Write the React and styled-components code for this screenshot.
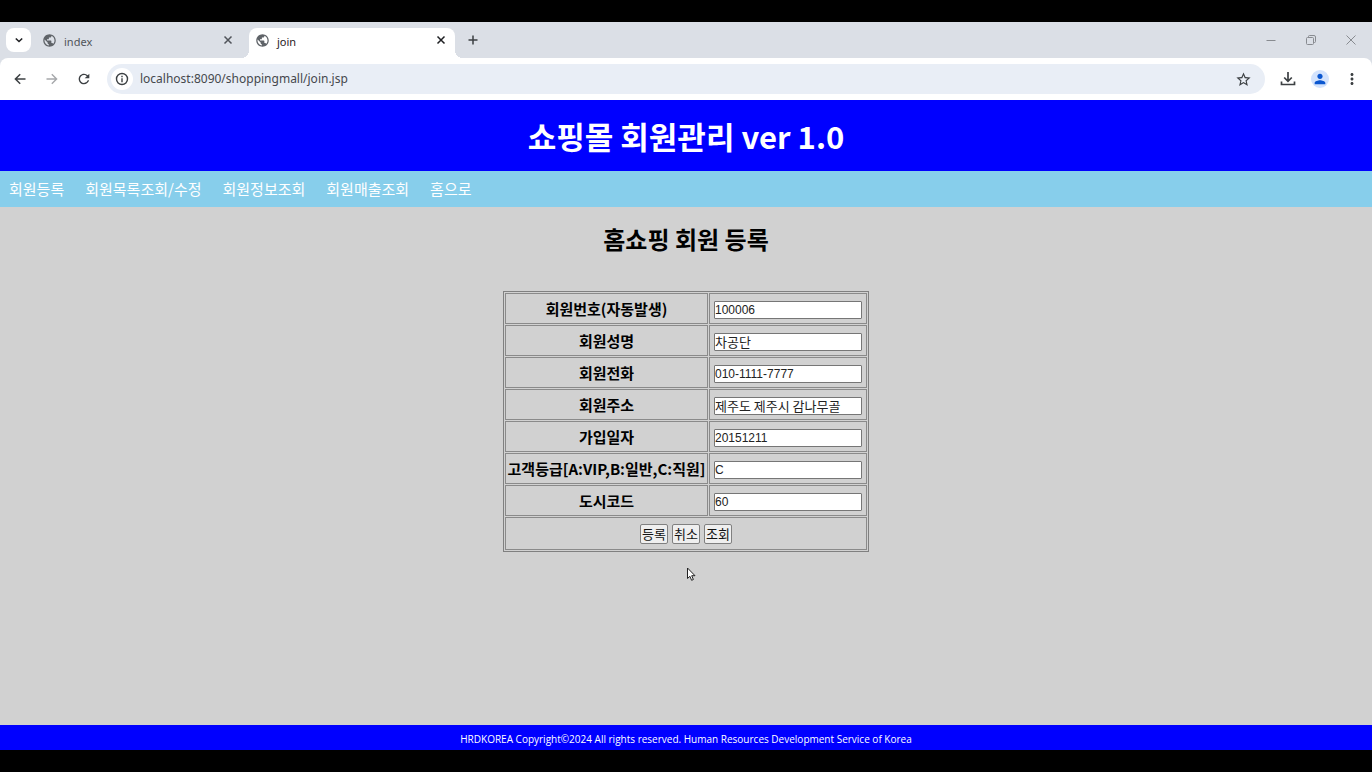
import React from "react";
import styled, { createGlobalStyle } from "styled-components";
import { MdPublic, MdRefresh, MdStarBorder, MdPerson, MdMoreVert } from "react-icons/md";

const GlobalStyle = createGlobalStyle`
  * { box-sizing: border-box; }
  body { margin: 0; background: #000; }
  button, input { font-family: inherit; }
`;

const Screen = styled.div`
  display: flex;
  flex-direction: column;
  min-height: 100vh;
  padding: 22px 0;
  background: #000;
  font-family: "Noto Sans CJK KR", sans-serif;
`;

/* Browser frame */
const TabStrip = styled.div`
  display: flex;
  height: 36px;
  padding: 6px 5px 0 6px;
  background: #dbdfe6;
`;

const IconButton = styled.button`
  display: flex;
  align-items: center;
  justify-content: center;
  flex: none;
  width: ${(p) => p.$width || 32}px;
  height: ${(p) => p.$height || 24}px;
  padding: 0;
  border: 0;
  border-radius: 8px;
  background: ${(p) => p.$bg || "transparent"};
  color: ${(p) => p.$color || "#3c4043"};
`;

const Tab = styled.div`
  position: relative;
  display: flex;
  align-items: center;
  width: ${(p) => (p.$active ? 206 : 218)}px;
  height: 30px;
  padding: ${(p) => (p.$active ? "0 4px 6px 6px" : "0 11px 6px 11px")};
  border-radius: 8px 8px 0 0;
  background: ${(p) => (p.$active ? "#fff" : "transparent")};
  color: ${(p) => (p.$active ? "#1f2023" : "#50545a")};

  &::before,
  &::after {
    content: "";
    display: ${(p) => (p.$active ? "block" : "none")};
    position: absolute;
    bottom: 0;
    width: 8px;
    height: 8px;
  }
  &::before {
    left: -8px;
    background: radial-gradient(circle at 0 0, transparent 8px, #fff 8px);
  }
  &::after {
    right: -8px;
    background: radial-gradient(circle at 100% 0, transparent 8px, #fff 8px);
  }
`;

const TabTitle = styled.span`
  flex: 1;
  padding: 3px 0 0 7px;
  font: 11px/18px "Noto Sans", sans-serif;
`;

const NewTab = styled(IconButton)`
  margin-left: 6px;
`;

const WindowControls = styled.div`
  display: flex;
  gap: 8px;
  margin-left: auto;
`;

const ToolbarBack = styled.div`
  background: #dbdfe6;
`;

const Toolbar = styled.div`
  display: flex;
  align-items: center;
  height: 42px;
  padding: 0 4px;
  border-radius: 8px 8px 0 0;
  background: #fff;
`;

const AddressBar = styled.form`
  display: flex;
  align-items: center;
  flex: 1;
  height: 30px;
  margin: 0 7px;
  padding: 0 6px 0 4px;
  border-radius: 15px;
  background: #e9eef6;
`;

const SiteInfo = styled(IconButton)`
  border-radius: 50%;
`;

const Address = styled.input`
  flex: 1;
  min-width: 0;
  padding: 0 0 0 7px;
  border: 0;
  outline: 0;
  background: transparent;
  color: #45484d;
  font: 12px/20px "Noto Sans", sans-serif;
`;

const Avatar = styled.span`
  display: flex;
  align-items: center;
  justify-content: center;
  width: 18px;
  height: 18px;
  border-radius: 50%;
  background: #d3e3fd;
  color: #0b57d0;
`;

/* Shopping mall page */
const Page = styled.div`
  position: relative;
  display: flex;
  flex-direction: column;
  flex: 1;
  background: #d1d1d1;
`;

const Header = styled.header`
  display: flex;
  align-items: center;
  justify-content: center;
  height: 71px;
  background: #00f;
`;

const SiteTitle = styled.h1`
  margin: 0;
  color: #fff;
  font-size: 31px;
  line-height: 46px;
`;

const Nav = styled.nav`
  display: flex;
  align-items: center;
  gap: 21px;
  height: 36px;
  padding: 0 9px;
  background: #87ceeb;
`;

const NavLink = styled.a`
  color: #fff;
  font-size: 15px;
  line-height: 24px;
  text-decoration: none;
`;

const Main = styled.main`
  display: flex;
  flex-direction: column;
  align-items: center;
  flex: 1;
  padding-top: 14px;
`;

const PageTitle = styled.h2`
  margin: 0 0 34px;
  color: #000;
  font-size: 24px;
  line-height: 36px;
`;

const FormTable = styled.table`
  border: 1px solid #808080;
  border-spacing: 1px;
`;

const LabelCell = styled.th`
  width: 203px;
  height: 31px;
  padding: 0;
  border: 1px solid #8a8a8a;
  font-size: 15px;
  line-height: 24px;
  white-space: nowrap;
`;

const InputCell = styled.td`
  width: 158px;
  padding: 2px 4px 0;
  border: 1px solid #8a8a8a;
`;

const TextInput = styled.input`
  display: block;
  width: 100%;
  height: 18px;
  padding: 0;
  border: 1px solid #767676;
  border-radius: 1px;
  background: #fff;
  color: #222;
  font-family: ${(p) => (p.$hangul ? '"Noto Sans CJK KR"' : '"Liberation Sans"')}, sans-serif;
  font-size: ${(p) => (p.$hangul ? 13 : 12)}px;
  line-height: 16px;
`;

const ActionCell = styled.td`
  height: 33px;
  padding: 1px 0 0;
  border: 1px solid #8a8a8a;
`;

const Actions = styled.div`
  display: flex;
  justify-content: center;
  gap: 4px;
`;

const ActionButton = styled.button`
  width: 28px;
  height: 20px;
  padding: 0;
  border: 1px solid #808080;
  border-radius: 2px;
  background: #efefef;
  color: #111;
  font-size: 13px;
  line-height: 18px;
`;

const Footer = styled.footer`
  height: 25px;
  padding-top: 2px;
  background: #00f;
  color: #fff;
  font: 10px/24px "Open Sans", sans-serif;
  text-align: center;
`;

const Pointer = styled.svg`
  position: absolute;
  top: 467px;
  left: 50%;
`;

const Stroke = ({ size = 16, width = 2, children }) => (
  <svg width={size} height={size} viewBox={`0 0 ${size} ${size}`} fill="none" stroke="currentColor" strokeWidth={width}>
    {children}
  </svg>
);

const CloseIcon = () => (
  <Stroke size={10} width={1.5}><path d="M1.5 1.5l7 7M8.5 1.5l-7 7" /></Stroke>
);

const tabs = [{ title: "index" }, { title: "join", active: true }];

const links = ["회원등록", "회원목록조회/수정", "회원정보조회", "회원매출조회", "홈으로"];

const fields = [
  { id: "custno", label: "회원번호(자동발생)", value: "100006" },
  { id: "custname", label: "회원성명", value: "차공단", hangul: true },
  { id: "phone", label: "회원전화", value: "010-1111-7777" },
  { id: "address", label: "회원주소", value: "제주도 제주시 감나무골", hangul: true },
  { id: "joindate", label: "가입일자", value: "20151211" },
  { id: "grade", label: "고객등급[A:VIP,B:일반,C:직원]", value: "C" },
  { id: "city", label: "도시코드", value: "60" },
];

function BrowserFrame() {
  return (
    <>
      <TabStrip>
        <IconButton $width={25} $bg="#fff" $color="#1f2023" aria-label="Search tabs">
          <Stroke size={10} width={1.6}><path d="M1.8 3.5L5 6.5l3.2-3" /></Stroke>
        </IconButton>
        {tabs.map((tab) => (
          <Tab key={tab.title} $active={tab.active}>
            <MdPublic size={15} color="#5f6368" />
            <TabTitle>{tab.title}</TabTitle>
            <IconButton $width={20} $color={tab.active ? "#1f2023" : "#50545a"} aria-label={`Close ${tab.title}`}>
              <CloseIcon />
            </IconButton>
          </Tab>
        ))}
        <NewTab $width={24} aria-label="New tab">
          <Stroke size={10} width={1.5}><path d="M5 .5v9M.5 5h9" /></Stroke>
        </NewTab>
        <WindowControls>
          <IconButton $color="#888b90" aria-label="Minimize">
            <Stroke size={10} width={1}><path d="M.5 5.5h9" /></Stroke>
          </IconButton>
          <IconButton $color="#888b90" aria-label="Restore">
            <Stroke size={10} width={1}>
              <rect x=".5" y="2.5" width="7" height="7" rx="1" />
              <path d="M2.5 2.5V1.5a1 1 0 0 1 1-1h4.500a1.500 1.500 0 0 1 1.500 1.500v4.500a1 1 0 0 1-1 1h-1" />
            </Stroke>
          </IconButton>
          <IconButton $color="#888b90" aria-label="Close window">
            <Stroke size={10} width={1}><path d="M.5.5l9 9M9.5.5l-9 9" /></Stroke>
          </IconButton>
        </WindowControls>
      </TabStrip>
      <ToolbarBack>
        <Toolbar>
          <IconButton aria-label="Back">
            <Stroke size={12} width={1.5}><path d="M11.5 6H1.5M6.2 1.2L1.4 6l4.8 4.8" /></Stroke>
          </IconButton>
          <IconButton $color="#a6a8ab" aria-label="Forward">
            <Stroke size={12} width={1.4}><path d="M.5 6h10M5.8 1.2L10.6 6l-4.8 4.8" /></Stroke>
          </IconButton>
          <IconButton aria-label="Reload"><MdRefresh size={16} /></IconButton>
          <AddressBar onSubmit={(e) => e.preventDefault()}>
            <SiteInfo type="button" $width={22} $height={22} $bg="#fff" aria-label="Site information">
              <Stroke size={14} width={1.4}>
                <circle cx="7" cy="7" r="5.5" />
                <path d="M7 6.2v4M7 3.8v1.4" />
              </Stroke>
            </SiteInfo>
            <Address aria-label="Address" defaultValue="localhost:8090/shoppingmall/join.jsp" />
            <IconButton type="button" aria-label="Bookmark"><MdStarBorder size={17} /></IconButton>
          </AddressBar>
          <IconButton aria-label="Downloads">
            <Stroke size={16} width={1.7}>
              <path d="M8 1v9M4.2 6.5L8 10.3l3.8-3.8M1.5 10.5v3h13v-3" />
            </Stroke>
          </IconButton>
          <IconButton aria-label="Profile"><Avatar><MdPerson size={16} /></Avatar></IconButton>
          <IconButton aria-label="Menu"><MdMoreVert size={18} /></IconButton>
        </Toolbar>
      </ToolbarBack>
    </>
  );
}

export default function App() {
  return (
    <Screen>
      <GlobalStyle />
      <BrowserFrame />
      <Page>
        <Header><SiteTitle>쇼핑몰 회원관리 ver 1.0</SiteTitle></Header>
        <Nav>{links.map((text) => <NavLink key={text} href="#">{text}</NavLink>)}</Nav>
        <Main>
          <PageTitle>홈쇼핑 회원 등록</PageTitle>
          <form onSubmit={(e) => e.preventDefault()}>
            <FormTable>
              <tbody>
                {fields.map((f) => (
                  <tr key={f.id}>
                    <LabelCell scope="row"><label htmlFor={f.id}>{f.label}</label></LabelCell>
                    <InputCell><TextInput id={f.id} type="text" defaultValue={f.value} $hangul={f.hangul} /></InputCell>
                  </tr>
                ))}
                <tr>
                  <ActionCell colSpan={2}>
                    <Actions>
                      <ActionButton type="submit">등록</ActionButton>
                      <ActionButton type="reset">취소</ActionButton>
                      <ActionButton type="button">조회</ActionButton>
                    </Actions>
                  </ActionCell>
                </tr>
              </tbody>
            </FormTable>
          </form>
        </Main>
        <Footer>HRDKOREA Copyright©2024 All rights reserved. Human Resources Development Service of Korea</Footer>
        <Pointer width="10" height="15" viewBox="0 0 10 15" aria-hidden="true">
          <path d="M1.5 1v10.500l2.400-2.200 1.700 4 1.800-.8-1.700-3.800H9z" fill="#fff" stroke="#222" strokeWidth="1" />
        </Pointer>
      </Page>
    </Screen>
  );
}
